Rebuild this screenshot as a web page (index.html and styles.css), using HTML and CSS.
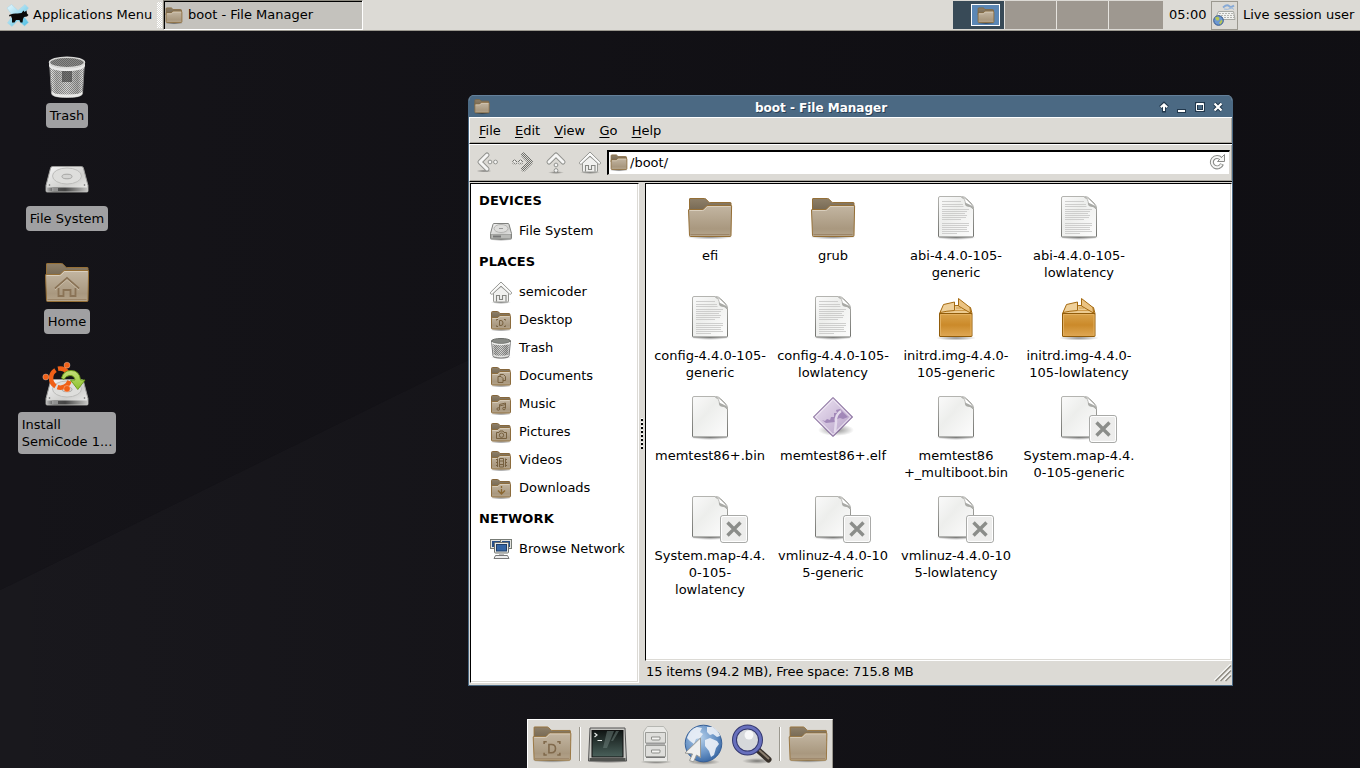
FILE: index.html
```html
<!DOCTYPE html>
<html lang="en">
<head>
<meta charset="utf-8">
<title>boot - File Manager</title>
<link rel="stylesheet" href="styles.css">
</head>
<body>
<svg class="defs" aria-hidden="true">
  <defs>
    <linearGradient id="gFront" x1="0" y1="0" x2="0" y2="1"><stop offset="0" stop-color="#c3b6a2"/><stop offset=".75" stop-color="#a9987f"/><stop offset="1" stop-color="#b5a58c"/></linearGradient>
    <linearGradient id="gBack" x1="0" y1="0" x2="0" y2="1"><stop offset="0" stop-color="#8f8069"/><stop offset="1" stop-color="#6f624d"/></linearGradient>
    <linearGradient id="gPage" x1="0" y1="0" x2="1" y2="1"><stop offset="0" stop-color="#fafafa"/><stop offset=".4" stop-color="#edeeec"/><stop offset="1" stop-color="#fdfdfd"/></linearGradient>
    <linearGradient id="gEdge" x1="0" y1="0" x2="0" y2="1"><stop offset="0" stop-color="#b4b4b0"/><stop offset="1" stop-color="#72736f"/></linearGradient>
    <linearGradient id="gBox" x1="0" y1="0" x2="0" y2="1"><stop offset="0" stop-color="#d9a24a"/><stop offset=".5" stop-color="#cb8a2a"/><stop offset="1" stop-color="#dfa855"/></linearGradient>
    <linearGradient id="gMetal" x1="0" y1="0" x2="1" y2="1"><stop offset="0" stop-color="#f5f5f5"/><stop offset=".6" stop-color="#cfcfcd"/><stop offset="1" stop-color="#efefee"/></linearGradient>
    <linearGradient id="gDark" x1="0" y1="0" x2="1" y2="0"><stop offset="0" stop-color="#bbb"/><stop offset=".18" stop-color="#555"/><stop offset=".45" stop-color="#444"/><stop offset="1" stop-color="#c8c8c6"/></linearGradient>
    <linearGradient id="gViolet" x1="0" y1="0" x2="1" y2="1"><stop offset="0" stop-color="#efe6f3"/><stop offset="1" stop-color="#b39dc6"/></linearGradient>
    <linearGradient id="gBin" x1="0" y1="0" x2="1" y2="0"><stop offset="0" stop-color="#f4f4f2"/><stop offset=".2" stop-color="#b5b5b3"/><stop offset=".5" stop-color="#d6d6d4"/><stop offset=".8" stop-color="#ababa9"/><stop offset="1" stop-color="#eee"/></linearGradient>
    <radialGradient id="gGlobe" cx=".4" cy=".35" r=".7"><stop offset="0" stop-color="#b5d0ea"/><stop offset=".6" stop-color="#6a94c6"/><stop offset="1" stop-color="#3665a2"/></radialGradient>
    <radialGradient id="gShade"><stop offset="0" stop-color="#000" stop-opacity=".45"/><stop offset="1" stop-color="#000" stop-opacity="0"/></radialGradient>
    <linearGradient id="gScreen" x1="0" y1="0" x2="0" y2="1"><stop offset="0" stop-color="#101514"/><stop offset="1" stop-color="#4a615b"/></linearGradient>
    <linearGradient id="gGreen" x1="0" y1="0" x2="0" y2="1"><stop offset="0" stop-color="#c5e07a"/><stop offset="1" stop-color="#8cc22c"/></linearGradient>
    <linearGradient id="gXfce" x1="0" y1="0" x2="1" y2="1"><stop offset="0" stop-color="#e8f8fd"/><stop offset="1" stop-color="#4dbde2"/></linearGradient>
    <linearGradient id="gNight" x1="0" y1="0" x2="1" y2="0"><stop offset="0" stop-color="#0d0c10" stop-opacity="0"/><stop offset=".7" stop-color="#0d0c10" stop-opacity=".6"/><stop offset="1" stop-color="#0d0c10" stop-opacity=".6"/></linearGradient>
    <pattern id="mesh" width="2" height="2" patternUnits="userSpaceOnUse"><rect width="1" height="1" fill="#444" fill-opacity=".5"/><rect x="1" y="1" width="1" height="1" fill="#444" fill-opacity=".5"/></pattern>
    <pattern id="stipple" width="2" height="2" patternUnits="userSpaceOnUse"><rect width="1" height="1" fill="#dcdad5"/><rect x="1" y="1" width="1" height="1" fill="#dcdad5"/></pattern>

    <symbol id="folder" viewBox="0 0 48 48">
      <ellipse cx="24" cy="43" rx="23" ry="2.500" fill="url(#gShade)"/>
      <path d="M3.500 20V5q0-.5.5-.5h14.500q1 0 1.700.8l2.400 2.600q.6.600 1.500.600H44.500q.5 0 .5.500V20z" fill="url(#gBack)" stroke="#956f36"/>
      <path d="M2.500 16q0-.5.6-.5h13q1 0 1.800-.8l2.500-2.600q.6-.6 1.600-.6h23q.6 0 .6.600L45 41.500q0 1-1 1H4.500q-1 0-1-1z" fill="url(#gFront)" stroke="#956f36"/>
      <path d="M3.700 16.500h13q1 0 1.800-.8l2.800-3.200H44.500" fill="none" stroke="#dacfbd"/>
      <path d="M4.500 40.500h39" stroke="#9b8569"/>
    </symbol>
    <symbol id="folder-sm" viewBox="0 0 24 24">
      <ellipse cx="12" cy="22" rx="11" ry="1.500" fill="url(#gShade)"/>
      <path d="M2.500 12V4.500q0-1 1-1h5q.7 0 1.200.6L11 5.500h9q1 0 1 1V12z" fill="url(#gBack)" stroke="#86673c"/>
      <path d="M2.500 10.500q0-1 1-1h5.300l2-2h9.700q1 0 1 1v11.500q0 1-1 1h-17q-1 0-1-1z" fill="url(#gFront)" stroke="#8c6c3d"/>
      <path d="M3.500 10.500h5.500l2-2h9.500" fill="none" stroke="#d6cbb8"/>
    </symbol>
    <symbol id="page" viewBox="0 0 48 48">
      <ellipse cx="24" cy="43.500" rx="20" ry="2.500" fill="url(#gShade)"/>
      <path d="M8 2.500h21.500q3 0 5 2l4.500 4.500q2.500 2.500 2.500 5.500v27.500q0 1-1 1H7.500q-1 0-1-1V4q0-1.500 1.500-1.500z" fill="url(#gPage)" stroke="url(#gEdge)"/>
      <path d="M29.500 3.500q3.500.5 4 6.500 0 2.200 2.500 2 4.500.3 5 3-.5-3.500-2-5.200L34 5q-2-1.500-4.500-1.500z" fill="#fff" stroke="#a9aaa6" stroke-width=".8"/>
      <path d="M33 8.500q0 4 3 4 2.800 0 5 2.800l-.5-3q-3.500-2-7.500-3.800z" fill="#a9aaa6"/>
    </symbol>
    <symbol id="textpage" viewBox="0 0 48 48">
      <use href="#page"/>
      <path d="M10 7.500h19M10 10.500h21M10 12.500h21.500M10 15.500h27M10 17.500h25M10 19.500h23M10 21.500h25M10 23.500h24M10 25.500h19M10 29.500h27M10 31.500h27M10 33.500h25M10 35.500h25M10 37.500h27M10 39.500h15" stroke="#c9cac8" stroke-width=".9"/>
    </symbol>
    <symbol id="lock" viewBox="0 0 28 28">
      <rect x=".5" y=".5" width="27" height="27" rx="2.500" fill="#ededec" stroke="#a9aaa8"/>
      <rect x="1.500" y="1.500" width="25" height="25" rx="2" fill="none" stroke="#fff"/>
      <path d="M7.500 7.500l13 13M20.500 7.500l-13 13" stroke="#8b8d8a" stroke-width="3.400"/>
    </symbol>
    <symbol id="package" viewBox="0 0 48 48">
      <ellipse cx="24" cy="44" rx="20" ry="2.500" fill="url(#gShade)"/>
      <g stroke="#a56a10" stroke-linejoin="round">
        <path d="M7.500 19.500L12 12l14-.5 12.500 2 1.500 6z" fill="#eccb91"/>
        <path d="M7.500 19.500h32.500v22.500q0 .5-.5.500H8q-.5 0-.5-.5z" fill="url(#gBox)" stroke="#915c0a"/>
        <path d="M8.500 41.500v-21h30.500v21" fill="none" stroke="#e3b061"/>
        <path d="M24 14h5M23 16.500h12" stroke="#d09c4c"/>
        <path d="M8 18.500l3.500-8 11-2.500v8.500q-8 .5-14.500 2z" fill="#efd09a"/>
        <path d="M26.500 4.500L38 13.500l.5 5.500-12-7z" fill="#ebc382"/>
      </g>
    </symbol>
    <symbol id="elf" viewBox="0 0 48 48">
      <ellipse cx="27" cy="37" rx="18" ry="6" fill="url(#gShade)"/>
      <path d="M24 4.500L43.500 24 24 43.500 4.500 24z" fill="url(#gViolet)" stroke="#6b4c85"/>
      <path d="M24 6.500L41.500 24 24 41.500 6.500 24z" fill="none" stroke="#f4eef8"/>
      <path d="M13 27l3 1 2-2 3 1 1-3h3v-4h3l-1-3 4-1 2 2 6 6-5 2-3-1-3 1-2 3-9 1z" fill="#9a7fb3" opacity=".85"/>
      <path d="M32 18q-6 4-5 11l-1 10" stroke="#e4daec" stroke-width="2.500" fill="none"/>
    </symbol>
    <symbol id="bin" viewBox="0 0 48 48">
      <ellipse cx="24" cy="44" rx="18" ry="3" fill="url(#gShade)"/>
      <path d="M6.500 9l2 31.500Q9 44.500 24 44.500T39.500 40.500l2-31.500z" fill="url(#gBin)" stroke="#888"/>
      <path d="M6.500 9l2 31.500Q9 44.500 24 44.500T39.500 40.500l2-31.500z" fill="url(#mesh)"/>
      <rect x="19" y="18" width="10" height="11" fill="#333" opacity=".6"/>
      <path d="M8.500 38q1 3.500 15.500 3.500T39.500 38l-.2 3Q38 44.500 24 44.500T8.700 41z" fill="#e9e9e7"/>
      <ellipse cx="24" cy="9.500" rx="17" ry="5" fill="#8a8a88"/>
      <ellipse cx="24" cy="9.500" rx="17" ry="5" fill="url(#mesh)"/>
      <path d="M6 10v3q2 5 18 5t18-5v-3q-2 5-18 5T6 10z" fill="#e9e9e8"/>
      <ellipse cx="24" cy="9.500" rx="17.500" ry="5.200" fill="none" stroke="#d9d9d7" stroke-width="1.500"/>
    </symbol>
    <symbol id="bin-sm" viewBox="0 0 24 24">
      <ellipse cx="12" cy="21.500" rx="10" ry="1.500" fill="url(#gShade)"/>
      <path d="M2.500 5l1.500 15q.5 2 8 2t8-2l1.500-15z" fill="url(#gBin)" stroke="#777"/>
      <path d="M4 8l1 12h14l1-12z" fill="url(#mesh)"/>
      <path d="M4.500 19q2 1.500 7.500 1.500t7.500-1.500" fill="none" stroke="#e4e4e2" stroke-width="1.500"/>
      <ellipse cx="12" cy="5" rx="9.500" ry="2.500" fill="#888a86" stroke="#6c6e6a"/>
      <path d="M2.800 6.500Q5 8.500 12 8.500t9.200-2" fill="none" stroke="#eeeeec" stroke-width="1.500"/>
    </symbol>
    <symbol id="drive" viewBox="0 0 48 48">
      <ellipse cx="24" cy="38" rx="22" ry="2.500" fill="url(#gShade)"/>
      <path d="M9.500 12.500h29q1.500 0 1.900 1.500L45 31.500v5.500q0 1-1 1H4q-1 0-1-1v-5.500L7.600 14q.4-1.500 1.900-1.500z" fill="url(#gMetal)" stroke="#9b9b99"/>
      <path d="M3.500 33.500h41.500v4H3.500z" fill="url(#gDark)"/>
      <path d="M10 34v3M12 34v3M14 34v3" stroke="#eee" stroke-width=".8"/>
      <ellipse cx="24" cy="22" rx="14.500" ry="8" fill="#dededc" stroke="#bdbdbb"/>
      <ellipse cx="24" cy="22.500" rx="5" ry="2.300" fill="#d4d4d2" stroke="#a5a5a3"/>
      <circle cx="6.500" cy="31" r=".8" fill="#666"/><circle cx="41.500" cy="31" r=".8" fill="#666"/>
    </symbol>
    <symbol id="drive-sm" viewBox="0 0 24 24">
      <ellipse cx="12" cy="20.500" rx="12" ry="1.500" fill="url(#gShade)"/>
      <path d="M5 4.500h14q.8 0 1 .8l2.500 9.200v4.500q0 1-1 1h-19q-1 0-1-1v-4.500L4 5.300q.2-.8 1-.8z" fill="url(#gMetal)" stroke="#7f807d"/>
      <path d="M2 15.500h20v4H2z" fill="#b9bab7" stroke="#8a8b88" stroke-width=".6"/><path d="M4 16.500h8v2H4z" fill="#777"/>
      <ellipse cx="12" cy="9.500" rx="7" ry="4" fill="#dededc" stroke="#b5b5b3"/><path d="M10 9.500h4" stroke="#999"/>
    </symbol>
    <symbol id="house" viewBox="0 0 24 24">
      <ellipse cx="12" cy="22.500" rx="10" ry="1.500" fill="url(#gShade)"/>
      <path d="M4.500 13v8q0 1 1 1h13q1 0 1-1v-8L12 6.500z" fill="#f1f1ef" stroke="#969793"/>
      <path d="M7.500 21.500v-6h3v4h3v-4h3.500v6" fill="none" stroke="#858682" stroke-width="1.100"/>
      <path d="M12 2L1.600 12.200q-.7 1 .2 1.700t1.700.1L12 6l8.500 8q.9.700 1.700-.1t.2-1.700z" fill="#fafaf9" stroke="#969793"/>
    </symbol>
    <symbol id="network" viewBox="0 0 24 24">
      <g stroke="#777b75" fill="#e3e4df"><rect x="1.500" y="2.500" width="11" height="9"/><rect x="11.500" y="2.500" width="11" height="9"/></g>
      <path d="M3 4h8v6H3zM13 4h8v6h-8z" fill="#274f86"/>
      <rect x="5.500" y="5.500" width="14" height="10.500" rx="1" fill="#e9eae6" stroke="#6d706b"/>
      <rect x="7.500" y="7.500" width="10" height="6.500" fill="#3465a4" stroke="#1d3d68"/>
      <path d="M10 16.500h5v3h-5z" fill="#bbb"/><path d="M6.500 18.500h12l1.500 3H5z" fill="#eee" stroke="#777"/>
    </symbol>
    <symbol id="chevron" viewBox="0 0 24 24">
      <path d="M11 5L4 12l7 7" fill="none" stroke="#92938f" stroke-width="5" stroke-linecap="round" stroke-linejoin="round"/>
      <path d="M11 5L4 12l7 7" fill="none" stroke="#f6f6f5" stroke-width="3" stroke-linecap="round" stroke-linejoin="round"/>
      <circle cx="14" cy="12" r="1.900" fill="#f6f6f5" stroke="#92938f"/><circle cx="19.500" cy="12" r="1.900" fill="#f6f6f5" stroke="#92938f"/>
    </symbol>
    <symbol id="refresh" viewBox="0 0 16 16">
      <path d="M12 4.800A5.200 5.200 0 1 0 13 10" fill="none" stroke="#8a8b88" stroke-width="4"/>
      <path d="M15.500.5v7H8.500l3-3z" fill="#f6f6f5" stroke="#8a8b88"/>
      <path d="M12 4.800A5.200 5.200 0 1 0 12.600 10.500" fill="none" stroke="#f6f6f5" stroke-width="2"/>
    </symbol>
  </defs>
</svg>

<main class="desktop">
  <svg class="wallpaper" viewBox="0 0 1360 768" preserveAspectRatio="none">
    <path d="M0 590L570 310H1360V768H0z" fill="#19181d"/>
    <path d="M0 31H1360V310H570L0 590z" fill="#151419"/>
    <path d="M0 0H1360V768H0z" fill="url(#gNight)"/>
  </svg>

  <header class="panel">
    <div class="appmenu">
      <svg class="xfce" viewBox="0 0 24 24">
        <path d="M1 5L5.500 1.500l6.500 6 7-6L22.500 5l-5.500 7 5.500 7.500-4 3.500L12 17.500 6 23.500 1.500 20l5-7.500z" fill="url(#gXfce)" stroke="#a5d5e8" stroke-width=".5"/>
        <path d="M4.500 11.500q3-1.500 7-1l4-.5 2-2.500 1 1.500 2-1.500.5 3 1.500 1.500-1.500 1.500-3 .5-1 2-.5 3.500h-2l-1-2.500H10l-1.500 2.500H6v-4l-1-2.500-1.500.5-.5-1.500z" fill="#0a0a0a"/>
      </svg>
      <span>Applications Menu</span>
    </div>
    <i class="grip"></i>
    <div class="task">
      <svg class="i20"><use href="#folder-sm"/></svg>
      <span>boot - File Manager</span>
    </div>
    <div class="pager">
      <div class="ws active"><div class="mini"><svg class="i20"><use href="#folder-sm"/></svg></div></div>
      <div class="ws"></div><div class="ws"></div><div class="ws last"></div>
    </div>
    <span class="clock">05:00</span>
    <div class="tray">
      <svg class="i24" viewBox="0 0 24 24">
        <path d="M10 4.500q4-3.500 6-1.500t5-.5" fill="none" stroke="#86a9d6" stroke-width="1.800"/>
        <path d="M11 6q4 1 6-.5t4 1" fill="none" stroke="#9ab8dd"/>
        <path d="M5.500 8.500h15l1.500 8H2z" fill="#f2f2f0" stroke="#a7a8a3"/>
        <path d="M6 10.500h14M5 12.500h16M5 14.500h16" stroke="#b3b4af" stroke-dasharray="2 1"/>
        <circle cx="5.500" cy="17.500" r="4.800" fill="#6c97d2" stroke="#34568a"/>
        <path d="M2 14.500l3-1 1.500 2-1 2H3.500zM6 20l2.500-3.500 1 2-2 3z" fill="#b8c653"/>
      </svg>
    </div>
    <span class="user">Live session user</span>
  </header>

  <nav class="icons">
    <div class="dicon"><svg class="i48"><use href="#bin"/></svg><span>Trash</span></div>
    <div class="dicon"><svg class="i48" viewBox="0 0 48 48"><use href="#drive" width="48" height="48" y="-2"/></svg><span>File System</span></div>
    <div class="dicon"><svg class="i48" viewBox="0 0 48 48"><use href="#folder"/><path d="M12 29.500l12-10.500 12 10.500M15.500 29v8h5v-6h7v6h5v-8" fill="none" stroke="#8a7356" stroke-width="1.800"/><path d="M12 31l12-10.500 12 10.500" fill="none" stroke="#d6cab6" stroke-width=".7"/></svg><span>Home</span></div>
    <div class="dicon"><svg class="i48" viewBox="0 0 48 48">
      <use href="#drive" width="48" height="48" y="5"/>
      <g fill="none" stroke="#f06017" stroke-width="4.500">
        <path d="M12.500 24.300A9.500 9.500 0 0 1 12.500 8.200"/>
        <path d="M15 6.800A9.500 9.500 0 0 1 24.500 10.500"/>
        <path d="M14.500 25.200A9.500 9.500 0 0 0 26.500 19"/>
      </g>
      <g fill="#f06017" stroke="#fff" stroke-opacity=".5" stroke-width=".6"><circle cx="2.800" cy="15" r="3"/><circle cx="24" cy="3.200" r="3"/><circle cx="24" cy="26.700" r="3.200"/></g>
      <path d="M18.500 16q2-7.500 9.500-7.500 8.500 0 9.500 9.500h4.500l-7.200 9.500L27.500 18h4.500q-.5-4.500-5-4.500-4 0-6 4z" fill="url(#gGreen)" stroke="#6a9a17" stroke-width=".9"/>
    </svg><span>Install<br>SemiCode 1...</span></div>
  </nav>

  <section class="window">
    <div class="titlebar">
      <svg class="i18"><use href="#folder-sm"/></svg>
      <h1>boot - File Manager</h1>
      <svg class="wbtns" viewBox="0 0 66 14">
        <path d="M7 12.500V4M3.500 7.500L7 4l3.500 3.500" stroke="#22384d" stroke-width="4" fill="none"/>
        <path d="M7 11V4.500M3.800 7.300L7 4.300l3.200 3" stroke="#fff" stroke-width="2" fill="none"/>
        <path d="M20 9h9v4h-9z" fill="#22384d"/><path d="M21 10h7v2h-7z" fill="#fff"/>
        <path d="M39.500 3.500h7v7h-7z" fill="none" stroke="#22384d" stroke-width="3"/><path d="M39.500 3.500h7v7h-7zM39.500 4.500h7" fill="none" stroke="#fff"/>
        <path d="M57.500 3.500l7 7M64.500 3.500l-7 7" stroke="#22384d" stroke-width="4"/><path d="M57.500 3.500l7 7M64.500 3.500l-7 7" stroke="#fff" stroke-width="2.200"/>
      </svg>
    </div>
    <div class="menubar"><span><u>F</u>ile</span><span><u>E</u>dit</span><span><u>V</u>iew</span><span><u>G</u>o</span><span><u>H</u>elp</span></div>
    <div class="toolbar">
      <svg class="i24" viewBox="0 0 24 24"><ellipse cx="8" cy="21" rx="8" ry="1.500" fill="url(#gShade)"/><use href="#chevron"/></svg>
      <svg class="i24" viewBox="0 0 24 24">
        <path d="M13.500 5l7 7-7 7" fill="none" stroke="#6f706c" stroke-width="5" stroke-linecap="round" stroke-linejoin="round"/>
        <g fill="#f6f6f5" stroke="#6f706c" stroke-width="1.200"><circle cx="10.500" cy="12" r="1.900"/><circle cx="4.700" cy="12" r="1.900"/></g>
        <rect width="24" height="24" fill="url(#stipple)"/>
      </svg>
      <svg class="i24" viewBox="0 0 24 24"><ellipse cx="12" cy="22.500" rx="8" ry="1.500" fill="url(#gShade)"/><g transform="matrix(0 1 -1 0 24 1)"><use href="#chevron" width="24" height="24"/></g></svg>
      <svg class="i24"><use href="#house"/></svg>
      <div class="entry">
        <svg class="i20"><use href="#folder-sm"/></svg><span>/boot/</span>
        <svg class="i16"><use href="#refresh"/></svg>
      </div>
    </div>
    <div class="body">
      <aside class="side">
        <h2>DEVICES</h2>
        <div class="row"><svg class="i24"><use href="#drive-sm"/></svg>File System</div>
        <h2>PLACES</h2>
        <div class="row"><svg class="i24"><use href="#house"/></svg>semicoder</div>
        <div class="row"><svg class="i24" viewBox="0 0 24 24"><use href="#folder-sm"/><path d="M7.500 12.500v-1h1.500M15 11.500h1.500v1M7.500 17.500v1h1.500M15 18.500h1.500v-1M10.500 12.500h1.500q2 0 2 2.500t-2 2.500h-1.500z" fill="none" stroke="#77603f"/></svg>Desktop</div>
        <div class="row"><svg class="i24"><use href="#bin-sm"/></svg>Trash</div>
        <div class="row"><svg class="i24" viewBox="0 0 24 24"><use href="#folder-sm"/><path d="M9 12.500h3l2 2v4H9zM11 12v-1.500h3.500l2 2v4H14" fill="none" stroke="#77603f"/></svg>Documents</div>
        <div class="row"><svg class="i24" viewBox="0 0 24 24"><use href="#folder-sm"/><path d="M10.500 17v-4.500l6-1.500v5M10.500 14l6-1.500" fill="none" stroke="#77603f"/><circle cx="9.300" cy="17" r="1.300" fill="none" stroke="#77603f"/><circle cx="15" cy="16.500" r="1.300" fill="none" stroke="#77603f"/></svg>Music</div>
        <div class="row"><svg class="i24" viewBox="0 0 24 24"><use href="#folder-sm"/><path d="M7.500 12.500h2.500l1-1.500h3l1 1.500h2.500v6h-10z" fill="none" stroke="#77603f"/><circle cx="12.500" cy="15.200" r="2.200" fill="none" stroke="#77603f"/></svg>Pictures</div>
        <div class="row"><svg class="i24" viewBox="0 0 24 24"><use href="#folder-sm"/><path d="M8.500 10.500v8.500M16.500 10.500v8.500M10.500 10.500h4v8.500h-4zM10.500 13h4M10.500 16.500h4M7 11.500h2M7 14.500h2M7 17.500h2M16 11.500h2M16 14.500h2M16 17.500h2" fill="none" stroke="#77603f"/></svg>Videos</div>
        <div class="row"><svg class="i24" viewBox="0 0 24 24"><use href="#folder-sm"/><path d="M12.500 10v2M12.500 13v4.500M9 14.500l3.500 3.500 3.500-3.500" fill="none" stroke="#8a6731" stroke-width="1.300"/></svg>Downloads</div>
        <h2>NETWORK</h2>
        <div class="row"><svg class="i24"><use href="#network"/></svg>Browse Network</div>
      </aside>
      <div class="paned"><i></i></div>
      <div class="right">
        <div class="files">
          <div class="file"><svg class="i48"><use href="#folder"/></svg>efi</div>
          <div class="file"><svg class="i48"><use href="#folder"/></svg>grub</div>
          <div class="file"><svg class="i48"><use href="#textpage"/></svg>abi-4.4.0-105-<br>generic</div>
          <div class="file"><svg class="i48"><use href="#textpage"/></svg>abi-4.4.0-105-<br>lowlatency</div>
          <div class="file"><svg class="i48"><use href="#textpage"/></svg>config-4.4.0-105-<br>generic</div>
          <div class="file"><svg class="i48"><use href="#textpage"/></svg>config-4.4.0-105-<br>lowlatency</div>
          <div class="file"><svg class="i48"><use href="#package"/></svg>initrd.img-4.4.0-<br>105-generic</div>
          <div class="file"><svg class="i48"><use href="#package"/></svg>initrd.img-4.4.0-<br>105-lowlatency</div>
          <div class="file"><svg class="i48"><use href="#page"/></svg>memtest86+.bin</div>
          <div class="file"><svg class="i48 up1"><use href="#elf"/></svg>memtest86+.elf</div>
          <div class="file"><svg class="i48"><use href="#page"/></svg>memtest86<br>+_multiboot.bin</div>
          <div class="file"><svg class="i48"><use href="#page"/></svg><svg class="emblem"><use href="#lock"/></svg>System.map-4.4.<br>0-105-generic</div>
          <div class="file"><svg class="i48"><use href="#page"/></svg><svg class="emblem"><use href="#lock"/></svg>System.map-4.4.<br>0-105-<br>lowlatency</div>
          <div class="file"><svg class="i48"><use href="#page"/></svg><svg class="emblem"><use href="#lock"/></svg>vmlinuz-4.4.0-10<br>5-generic</div>
          <div class="file"><svg class="i48"><use href="#page"/></svg><svg class="emblem"><use href="#lock"/></svg>vmlinuz-4.4.0-10<br>5-lowlatency</div>
        </div>
        <div class="status"><span>15 items (94.2 MB), Free space: 715.8 MB</span>
          <svg class="resize" viewBox="0 0 17 17"><path d="M.5 16.500l16-16M5.500 16.500l11-11M10.500 16.500l6-6" stroke="#fff" stroke-width="1.500"/><path d="M1.500 17l15.500-15.500M6.500 17l10.500-10.500M11.500 17l5.500-5.500" stroke="#8e8b82" stroke-width="1.500"/></svg>
        </div>
      </div>
    </div>
  </section>

  <footer class="dock">
    <svg class="d42" viewBox="0 0 48 48"><use href="#folder"/><path d="M15 24v-2.500h3M30 21.500h3v2.500M15 34v2.500h3M30 36.500h3v-2.500M20.500 24.500h3q4.500 0 4.500 4.500t-4.500 5h-3z" fill="none" stroke="#80694b" stroke-width="1.800"/></svg>
    <i class="sep"></i>
    <svg class="d42" viewBox="0 0 42 42">
      <ellipse cx="21" cy="38" rx="21" ry="2.500" fill="url(#gShade)"/>
      <path d="M3 5h35l1.500 33h-38z" fill="#c9c9c5" stroke="#555"/><path d="M2.500 35h36v3h-36z" fill="#50524f"/>
      <rect x="5" y="7.500" width="31" height="26.500" fill="url(#gScreen)" stroke="#111"/>
      <path d="M20 8h7l-7 17h-4zM29 8h3l-6 10h-2z" fill="#70827d" opacity=".5"/>
      <path d="M7.500 10l2.500 2-2.500 2M10.500 17.500h4.500" stroke="#e8ece9" fill="none" stroke-width="1.200"/>
    </svg>
    <svg class="d42" viewBox="0 0 42 42">
      <ellipse cx="21" cy="39" rx="16" ry="2" fill="url(#gShade)"/>
      <path d="M8.500 9l3-4.500q.5-1 1.500-1h15q1 0 1.500 1l3 4.500v28.500q0 1-1 1h-22q-1 0-1-1z" fill="#e9e9e6" stroke="#b6b7b2"/>
      <path d="M10.500 9.500h20v10.500h-20zM10.500 22.500h20v11h-20z" fill="#dededb" stroke="#9b9c98"/>
      <path d="M11 21h19M11 34.500h19" stroke="#777"/>
      <path d="M16.500 14h8.500v2q0 1-1 1h-6.500q-1 0-1-1zM16.500 27h8.500v2q0 1-1 1h-6.500q-1 0-1-1z" fill="#f4f4f2" stroke="#8c8d89"/>
    </svg>
    <svg class="d42" viewBox="0 0 42 42">
      <ellipse cx="21" cy="39" rx="16" ry="3" fill="url(#gShade)"/>
      <circle cx="20.500" cy="20.500" r="18.300" fill="url(#gGlobe)" stroke="#365f97"/>
      <path d="M4 15q3-9 10-11l5 1-2 4 3 2-3 4-4 1-2 5-4-3zM24 4h6q6 4 7 9l-3 1-4-3-3 1-3-3zM22 17l5-2 7 3 2 3-3 4-2 7-3 2-2-6-4-5z" fill="#e9eff6" opacity=".93"/>
      <path d="M17.500 15v19.500l-4-2.500-3 7-4-1.500 3-6.500-7.500-1z" fill="#efefee" stroke="#999a97"/>
    </svg>
    <svg class="d42" viewBox="0 0 42 42">
      <ellipse cx="26" cy="38" rx="15" ry="3" fill="url(#gShade)"/>
      <path d="M27 27l10.500 9.500" stroke="#37302a" stroke-width="6" stroke-linecap="round"/><path d="M28 27l10 9" stroke="#8c7f70" stroke-width="2"/>
      <circle cx="16.500" cy="17" r="13" fill="#d6d8db" stroke="#34386f" stroke-width="5"/>
      <circle cx="16.500" cy="17" r="13" fill="none" stroke="#6870bd" stroke-width="3"/>
      <circle cx="18" cy="12" r="4.500" fill="#fff" opacity=".8"/>
    </svg>
    <i class="sep"></i>
    <svg class="d42"><use href="#folder"/></svg>
  </footer>
</main>
</body>
</html>
```
FILE: styles.css
```css
* { box-sizing: border-box; }
body { margin: 0; font: 13px/17px "DejaVu Sans", Verdana, sans-serif; color: #000; overflow: hidden; }
svg { display: block; flex: none; overflow: visible; }
h1, h2 { margin: 0; font-size: 13px; font-weight: bold; }
.defs { position: absolute; width: 0; height: 0; }
.i16 { width: 16px; height: 16px; }
.i18 { width: 18px; height: 18px; }
.i20 { width: 20px; height: 20px; }
.i24 { width: 24px; height: 24px; }
.i48 { width: 48px; height: 48px; }

.desktop { position: relative; width: 1360px; height: 768px; background: #15141a; overflow: hidden; }
.wallpaper { position: absolute; inset: 0; width: 1360px; height: 768px; }

.panel { position: relative; display: flex; height: 31px; background: #dcdad5; border-bottom: 1px solid #9b988f; }
.appmenu { display: flex; align-items: center; gap: 3px; width: 156px; padding: 0 0 1px 6px; }
.xfce { width: 24px; height: 24px; }
.grip { width: 5px; height: 26px; margin: 2px 2px 0 1px; background: repeating-conic-gradient(#fff 0 25%, #dcdad5 0 50%) 0 0 / 2px 2px; }
.task { display: flex; align-items: center; gap: 4px; width: 200px; height: 30px; margin-left: -1px; padding-bottom: 1px; background: #c4c2bd; border: 1px solid #fff; border-top-color: #8e8b82; border-left-color: #8e8b82; box-shadow: inset 1px 1px #000; }
.pager { display: flex; gap: 1px; margin: 1px 0 0 auto; height: 28px; background: #e6e4df; }
.ws { width: 51px; background: #9e9890; }
.ws.last { width: 54px; }
.ws.active { background: #384a57; padding: 3px 0 0 18px; }
.mini { display: flex; align-items: center; justify-content: center; width: 29px; height: 22px; border: 1px solid #fff; background: #5b87b5; }
.clock { padding: 6px 0 0 6px; width: 48px; }
.tray { width: 27px; height: 29px; margin-top: 1px; padding: 1px 0 0 1px; border: 1px solid #9b988f; }
.user { width: 122px; padding: 6px 0 0 5px; white-space: nowrap; }

.icons { position: absolute; left: 0; top: 53px; width: 134px; display: flex; flex-direction: column; gap: 28px; }
.dicon { display: flex; flex-direction: column; align-items: center; gap: 2px; }
.dicon span { padding: 4px; border-radius: 4px; background: #a0a0a2; }

.window { position: absolute; left: 468px; top: 95px; width: 765px; height: 591px; display: flex; flex-direction: column; background: #dcdad5; border: 1px solid #4b6983; border-top: 0; border-radius: 6px 6px 0 0; overflow: hidden; }
.titlebar { display: flex; align-items: center; height: 22px; padding: 1px 9px 0 4px; background: #4b6983; border-top: 1px solid #64809a; color: #fff; }
.titlebar h1 { flex: 1; padding-top: 2px; font-size: 12px; text-align: center; text-indent: -6px; text-shadow: 1px 1px #2b4257; }
.titlebar .i18 { margin-top: -2px; }
.wbtns { width: 66px; height: 14px; }
.menubar { display: flex; gap: 14.200px; height: 27px; padding: 4px 0 0 9px; border-top: 1px solid #fff; border-left: 1px solid #fff; border-bottom: 1px solid #000; box-shadow: inset -1px -1px #aaa79f; }
.menubar u { text-decoration: underline; text-underline-offset: 2px; }
.toolbar { display: flex; align-items: center; gap: 10px; height: 38px; padding: 0 2px 2px 6px; border-top: 1px solid #fff; border-left: 1px solid #fff; border-bottom: 1px solid #000; box-shadow: inset -1px -1px #aaa79f; }
.entry { flex: 1; display: flex; align-items: center; height: 25px; margin-left: -5px; padding: 0 4px 1px 0; background: #fff; border: 1px solid #dcdad5; border-top: 2px solid #000; border-left: 2px solid #000; }
.entry span { flex: 1; padding: 1px 0 0 1px; }
.body { flex: 1; display: flex; min-height: 0; padding: 1px 1px 0; }
.side { width: 169px; height: 500px; background: #fff; border: 1px solid #000; border-right: 1px solid #fff; border-bottom: 1px solid #fff; box-shadow: inset -1px -1px #dcdad5; }
.side h2 { height: 33px; padding: 8px 0 0 8px; letter-spacing: .1px; }
.row { display: flex; align-items: center; gap: 6px; height: 28px; padding: 0 0 2px 18px; white-space: nowrap; }
.row svg { margin-top: 2px; }
.paned { width: 6px; display: flex; align-items: center; }
.paned i { width: 2px; height: 32px; margin-left: 2px; background: repeating-linear-gradient(#fff 0 1px, #000 1px 3px, #dcdad5 3px 4px); }
.right { flex: 1; display: flex; flex-direction: column; }
.files { height: 478px; margin-right: -1px; padding: 8px 0 0 2px; display: grid; grid-template-columns: repeat(4, 123px); grid-auto-rows: 100px; align-content: start; background: #fff; border: 1px solid #000; border-right-color: #fff; border-bottom-color: #fff; box-shadow: inset -1px -1px #dcdad5; }
.file { position: relative; padding: 2px 0 0 1px; text-align: center; white-space: nowrap; }
.file .i48 { margin: 0 37px 5px; }
.file .up1 { margin: -1px 37px 6px; }
.emblem { position: absolute; left: 72px; top: 23px; width: 28px; height: 28px; }
.status { flex: 1; display: flex; justify-content: space-between; padding: 2px 0 0 1px; letter-spacing: -.12px; }
.resize { width: 17px; height: 17px; margin-top: 1px; }

.dock { position: absolute; left: 527px; top: 719px; width: 306px; height: 49px; display: flex; align-items: center; padding: 0 3px 1px; background: #dcdad5; border: 1px solid #fff; border-right-color: #9b988f; border-bottom: 0; }
.d42 { width: 42px; height: 42px; margin-right: 6px; }
.d42:last-child { margin-right: 0; }
.sep { width: 2px; height: 34px; margin: 0 6px 0 0; background: linear-gradient(90deg, #9b988f 50%, #fff 50%); }
```
